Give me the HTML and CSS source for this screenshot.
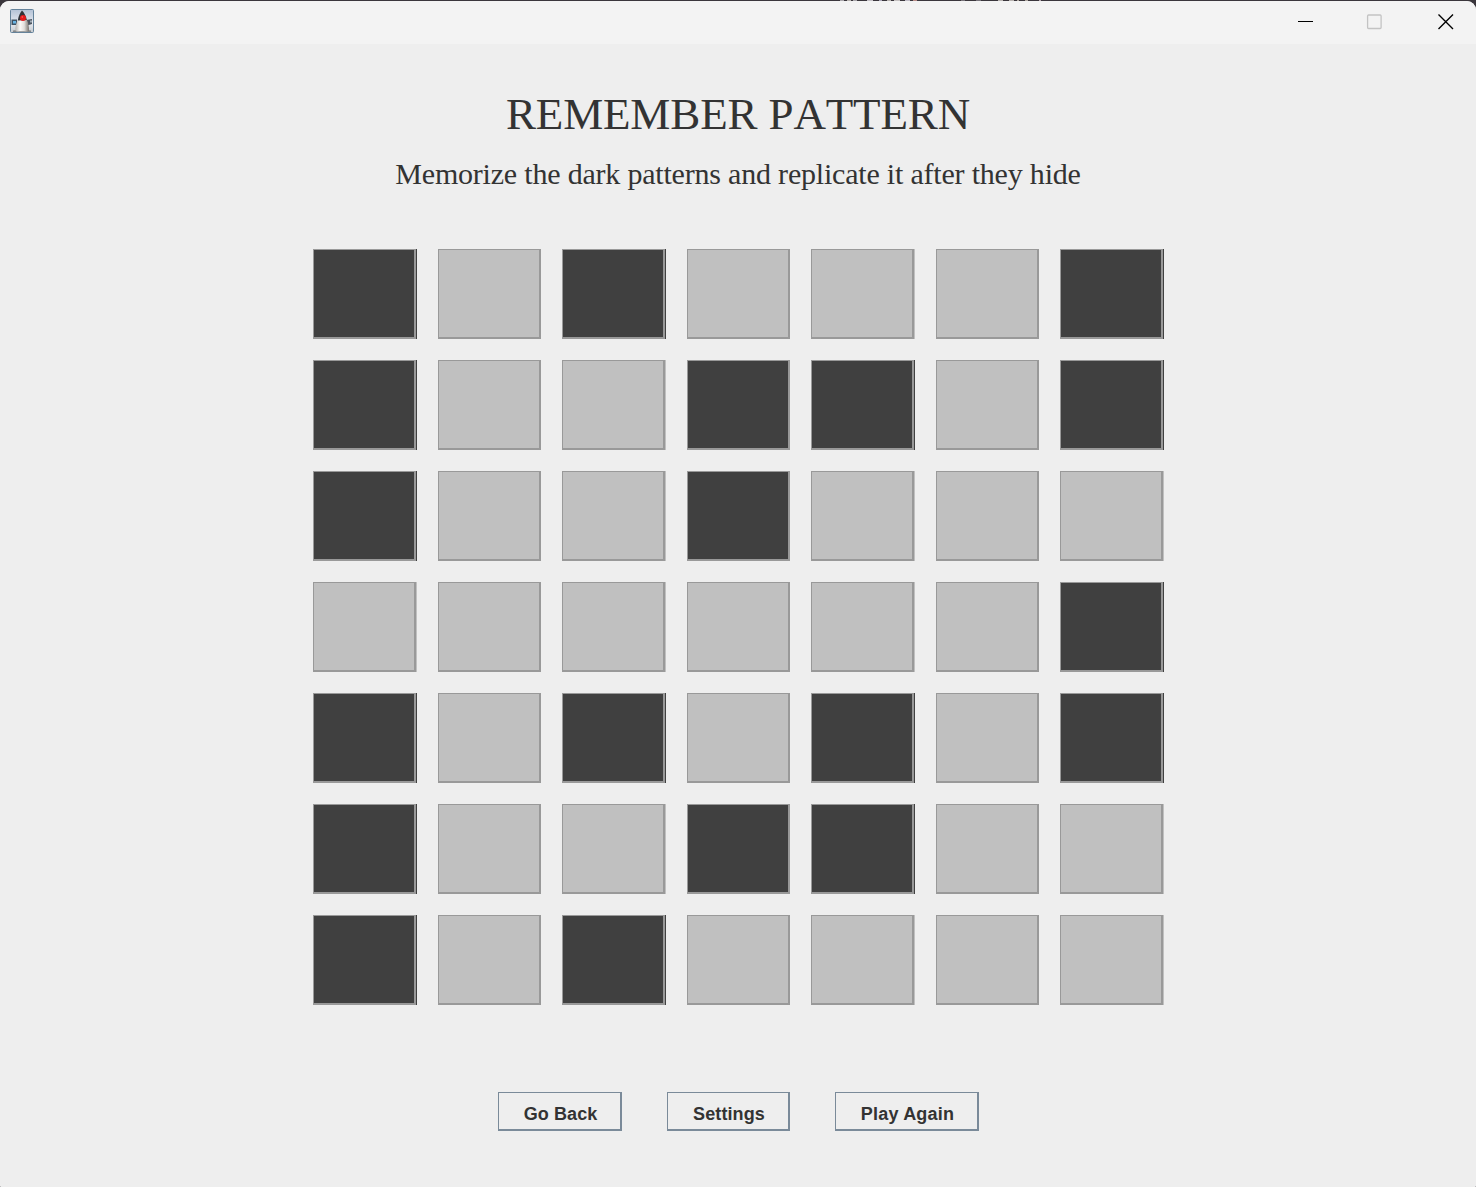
FILE: index.html
```html
<!DOCTYPE html>
<html lang="en">
<head>
<meta charset="utf-8">
<title>Remember Pattern</title>
<link rel="stylesheet" href="styles.css">
</head>
<body>
<div class="window">
  <header class="titlebar">
    <svg class="app-icon" width="24" height="24" viewBox="0 0 24 24">
      <defs>
        <linearGradient id="sky" x1="0" y1="0" x2="0" y2="1"><stop offset="0" stop-color="#b4c2d6"/><stop offset=".6" stop-color="#e6eaf0"/><stop offset="1" stop-color="#c4c9ce"/></linearGradient>
        <linearGradient id="belly" x1="0" y1="0" x2="1" y2="0"><stop offset="0" stop-color="#b5b3b0"/><stop offset=".35" stop-color="#fbfaf8"/><stop offset=".65" stop-color="#e2dfdb"/><stop offset="1" stop-color="#77736e"/></linearGradient>
      </defs>
      <rect x=".5" y=".5" width="23" height="23" rx="1" fill="url(#sky)" stroke="#64829a"/>
      <path d="M1.500 10.500H7v5.500H1.500z" fill="#3e5263"/><path d="M3 12h3v2.500H3z" fill="#68b4e4"/>
      <path d="M16 11l6-1v5l-5 1.500z" fill="#4c545e"/><path d="M20 11.500h2v2h-2z" fill="#a0acb6"/>
      <path d="M3 21.500c5-1.500 13-1.500 18 0V23H3z" fill="#85888a"/>
      <path d="M8 10.500c-2 4-3 8-2.500 11.500 2 1 4 .3 6.500.3s4.500.7 7-.3C19.200 18 18.500 14 16.500 10z" fill="url(#belly)"/>
      <path d="M12 1.500c-1.800 2-3.500 5.500-4.200 10l9-.5C16.200 7.500 14.200 3.500 12 1.500z" fill="#303238"/>
      <circle cx="13" cy="9" r="3" fill="#e51a1c"/><circle cx="12.300" cy="8" r=".8" fill="#ff6666"/>
    </svg>
    <div class="controls">
      <svg class="control" width="16" height="16" viewBox="0 0 16 16"><path d="M0 7.500h15" stroke="#000"/></svg>
      <svg class="control" width="16" height="16" viewBox="0 0 16 16"><rect x="-.4" y="1" width="13.500" height="13.500" rx="1" fill="none" stroke="#c3c3c3" stroke-width="1.300"/></svg>
      <svg class="control" width="16" height="16" viewBox="0 0 16 16"><path d="M.5.500l14.500 14.500M15 .5L.5 15" stroke="#000" stroke-width="1.400"/></svg>
    </div>
  </header>
  <main class="content">
    <h1 class="title">REMEMBER PATTERN</h1>
    <p class="subtitle">Memorize the dark patterns and replicate it after they hide</p>
    <div class="board">
      <i class="cell dark"></i><i class="cell"></i><i class="cell dark"></i><i class="cell"></i><i class="cell"></i><i class="cell"></i><i class="cell dark"></i>
      <i class="cell dark"></i><i class="cell"></i><i class="cell"></i><i class="cell dark"></i><i class="cell dark"></i><i class="cell"></i><i class="cell dark"></i>
      <i class="cell dark"></i><i class="cell"></i><i class="cell"></i><i class="cell dark"></i><i class="cell"></i><i class="cell"></i><i class="cell"></i>
      <i class="cell"></i><i class="cell"></i><i class="cell"></i><i class="cell"></i><i class="cell"></i><i class="cell"></i><i class="cell dark"></i>
      <i class="cell dark"></i><i class="cell"></i><i class="cell dark"></i><i class="cell"></i><i class="cell dark"></i><i class="cell"></i><i class="cell dark"></i>
      <i class="cell dark"></i><i class="cell"></i><i class="cell"></i><i class="cell dark"></i><i class="cell dark"></i><i class="cell"></i><i class="cell"></i>
      <i class="cell dark"></i><i class="cell"></i><i class="cell dark"></i><i class="cell"></i><i class="cell"></i><i class="cell"></i><i class="cell"></i>
    </div>
    <div class="actions">
      <button class="action back">Go Back</button>
      <button class="action settings">Settings</button>
      <button class="action again">Play Again</button>
    </div>
  </main>
</div>
</body>
</html>
```
FILE: styles.css
```css
* { box-sizing: border-box; }
body {
  margin: 0;
  padding-top: 1px;
  height: 1187px;
  /* slivers of the window behind, visible above the title bar */
  background:
    linear-gradient(90deg, transparent 840px, #a9a6ab 840px 844px, transparent 844px 847px, #b8b3b0 847px 851px, transparent 851px 853px, #a9a6ab 853px 857px, transparent 857px 867px, #c4c0c6 867px 873px, transparent 873px 879px, #aaa6b8 879px 882px, transparent 882px 887px, #b8b3b0 887px 891px, transparent 891px 894px, #c4c0c0 894px 900px, transparent 900px 905px, #c0bcc6 905px 910px, transparent 910px 913px, #b98c88 913px 917px, transparent 917px 961px, #77737a 961px 965px, transparent 965px 976px, #77737a 976px 981px, transparent 981px 998px, #b8b3b0 998px 1003px, transparent 1003px 1009px, #b8b3b0 1009px 1014px, transparent 1014px 1017px, #b0a8a0 1017px 1019px, transparent 1019px 1025px, #b0a8a0 1025px 1028px, transparent 1028px 1039px, #b8a8b0 1039px 1041px, transparent 1041px) top / 100% 1px no-repeat,
    #3a363c;
  overflow: hidden;
}
.window {
  height: 1186px;
  background: #eee;
  border-radius: 9px 9px 1px 1px;
  overflow: hidden;
}
.titlebar {
  height: 43px;
  padding: 8px 22px 0 10px;
  background: #f3f3f3;
  display: flex;
  justify-content: space-between;
}
.app-icon { display: block; }
.controls {
  display: flex;
  gap: 54px;
  padding-top: 5px;
}
.control { display: block; overflow: visible; }
.content {
  display: flex;
  flex-direction: column;
  align-items: center;
  color: #333;
  font-kerning: none;
}
.title, .subtitle {
  margin: 0;
  font-family: "Liberation Serif", "Times New Roman", serif;
  font-weight: 400;
  white-space: nowrap;
}
.title {
  margin-top: 44px;
  font-size: 45px;
  line-height: 52px;
  letter-spacing: -.13px;
}
.subtitle {
  margin-top: 17px;
  font-size: 30px;
  line-height: 34px;
  letter-spacing: -.2px;
}
.board {
  margin-top: 58px;
  display: grid;
  grid-template-columns: 104px 103px 104px 103px 104px 103px 104px;
  grid-auto-rows: 90px;
  gap: 21px;
}
.cell {
  width: 103px;
  background: #c0c0c0;
  border: solid #999;
  border-width: 1px 2px 2px 1px;
}
.cell.dark { background: #404040; }
.cell:nth-child(7n+1), .cell:nth-child(7n+3), .cell:nth-child(7n+5), .cell:nth-child(7n) {
  box-shadow: 1px 0 #c0c0c0;
}
.cell.dark:nth-child(7n+1), .cell.dark:nth-child(7n+3), .cell.dark:nth-child(7n+5), .cell.dark:nth-child(7n) {
  box-shadow: 1px 0 #404040;
}
.actions {
  margin-top: 87px;
  display: flex;
  gap: 45px;
}
.action {
  height: 39px;
  padding: 4px 0 0 3px;
  background: #eee;
  border: solid #7a8a99;
  border-width: 1px 2px 2px 1px;
  color: #333;
  font: bold 18px/34px "Liberation Sans", Arial, sans-serif;
  letter-spacing: .1px;
}
.back { width: 124px; }
.settings { width: 123px; }
.again { width: 144px; letter-spacing: .2px; }
```
